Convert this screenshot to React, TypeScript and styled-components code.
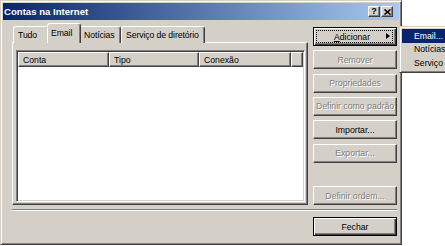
import React from "react";
import styled, { createGlobalStyle } from "styled-components";

const GlobalStyle = createGlobalStyle`
  html, body {
    margin: 0;
    padding: 0;
    background: #fff;
    overflow: hidden;
  }
  body {
    font-family: "Liberation Sans", Arial, sans-serif;
    font-size: 8.7px;
    color: #000;
  }
`;

const Screen = styled.div`
  position: relative;
  width: 445px;
  height: 246px;
  overflow: hidden;
`;

const Window = styled.div`
  width: 402px;
  box-sizing: border-box;
  background: #d4d0c8;
  border: 1px solid;
  border-color: #d4d0c8 #404040 #404040 #d4d0c8;
  box-shadow: inset 1px 1px #fff, inset -1px -1px #808080;
  padding: 2px;
`;

const TitleBar = styled.div`
  height: 17px;
  display: flex;
  align-items: center;
  justify-content: space-between;
  padding: 0 6px 0 1px;
  background: linear-gradient(to right, #0a246a, #a6caf0);
`;

const TitleText = styled.span`
  color: #fff;
  font-weight: bold;
  font-size: 9.6px;
`;

const CaptionButtons = styled.div`
  display: flex;
  gap: 1px;
`;

const CaptionButton = styled.div`
  width: 12px;
  height: 11px;
  box-sizing: border-box;
  background: #d4d0c8;
  border: 1px solid;
  border-color: #fff #404040 #404040 #fff;
  box-shadow: inset -1px -1px #808080;
  display: flex;
  align-items: center;
  justify-content: center;
  font-weight: bold;
  font-size: 9px;
  line-height: 1;
`;

const Body = styled.div`
  padding: 3px 2px 6px 9px;
`;

const MainRow = styled.div`
  display: flex;
  gap: 5px;
  height: 182px;
`;

const LeftColumn = styled.div`
  width: 296px;
  display: flex;
  flex-direction: column;
`;

const TabRow = styled.div`
  display: flex;
  align-items: flex-end;
  height: 20px;
  margin-bottom: -1px;
  padding-left: 1px;
  position: relative;
  z-index: 1;
`;

const Tab = styled.div<{ $active?: boolean; $width: number }>`
  box-sizing: border-box;
  width: ${(p) => p.$width}px;
  flex: none;
  height: ${(p) => (p.$active ? "20px" : "17px")};
  padding: ${(p) => (p.$active ? "0 0 2px 3px" : "0 0 0 4px")};
  margin: ${(p) => (p.$active ? "0 -2px" : "0")};
  position: relative;
  z-index: ${(p) => (p.$active ? 2 : 1)};
  display: flex;
  align-items: center;
  white-space: nowrap;
  letter-spacing: -0.1px;
  background: #d4d0c8;
  border-top: 1px solid #fff;
  border-left: 1px solid #fff;
  border-right: 1px solid #404040;
  box-shadow: inset -1px 0 #808080;
  border-radius: 3px 3px 0 0;
`;

const Panel = styled.div`
  flex: 1;
  display: flex;
  flex-direction: column;
  box-sizing: border-box;
  border: 1px solid;
  border-color: #fff #404040 #404040 #fff;
  box-shadow: inset -1px -1px #808080;
  padding: 7px 2px 2px 3px;
`;

const ListView = styled.div`
  flex: 1;
  background: #fff;
  border: 1px solid;
  border-color: #808080 #fff #fff #808080;
  box-shadow: inset 1px 1px #404040, inset -1px -1px #d4d0c8;
  padding: 1px;
`;

const Header = styled.div`
  display: flex;
  height: 15px;
`;

const HeaderCell = styled.div<{ $width?: number }>`
  box-sizing: border-box;
  ${(p) => (p.$width ? `width: ${p.$width}px;` : "flex: 1;")}
  display: flex;
  align-items: center;
  padding-left: 4px;
  background: #d4d0c8;
  border: 1px solid;
  border-color: #fff #404040 #404040 #fff;
  box-shadow: inset -1px -1px #808080;
  white-space: nowrap;
`;

const ButtonColumn = styled.div`
  width: 84px;
  display: flex;
  flex-direction: column;
  gap: 4.33px;
  padding-top: 4px;
`;

const Button = styled.div<{ $default?: boolean; $disabled?: boolean; $pushDown?: boolean }>`
  position: relative;
  height: 19px;
  flex: none;
  box-sizing: border-box;
  display: flex;
  align-items: center;
  justify-content: center;
  background: #d4d0c8;
  white-space: nowrap;
  color: ${(p) => (p.$disabled ? "#808080" : "#000")};
  text-shadow: ${(p) => (p.$disabled ? "1px 1px 0 #fff" : "none")};
  margin-top: ${(p) => (p.$pushDown ? "auto" : "0")};
  border: 1px solid;
  border-color: ${(p) => (p.$default ? "#000" : "#fff #404040 #404040 #fff")};
  box-shadow: ${(p) =>
    p.$default
      ? "inset 1px 1px #fff, inset -1px -1px #404040, inset -2px -2px #808080"
      : "inset -1px -1px #808080"};
`;

const MenuButton = styled(Button)`
  padding-right: 6px;

  &::after {
    content: "";
    position: absolute;
    inset: 2px 3px 2px 2px;
    border: 1px dotted #000;
  }
`;

const Arrow = styled.span`
  position: absolute;
  right: 6px;
  top: 5px;
  width: 0;
  height: 0;
  border-top: 3.5px solid transparent;
  border-bottom: 3.5px solid transparent;
  border-left: 4px solid #000;
`;

const Underline = styled.span`
  text-decoration: underline;
`;

const Separator = styled.div`
  margin-top: 4px;
  border-top: 1px solid #808080;
  border-bottom: 1px solid #fff;
`;

const Footer = styled.div`
  display: flex;
  justify-content: flex-end;
  margin-top: 6px;
`;

const FooterButton = styled(Button)`
  width: 84px;
`;

const Menu = styled.div`
  position: absolute;
  left: 399px;
  top: 26px;
  width: 110px;
  box-sizing: border-box;
  background: #d4d0c8;
  border: 1px solid;
  border-color: #d4d0c8 #404040 #404040 #d4d0c8;
  box-shadow: inset 1px 1px #fff, inset -1px -1px #808080;
  padding: 2px;
`;

const MenuItem = styled.div<{ $selected?: boolean }>`
  height: 13.5px;
  display: flex;
  align-items: center;
  padding-left: 12px;
  white-space: nowrap;
  background: ${(p) => (p.$selected ? "#0a246a" : "transparent")};
  color: ${(p) => (p.$selected ? "#fff" : "#000")};
`;

const tabs = [
  { label: "Tudo", width: 36 },
  { label: "Email", width: 34 },
  { label: "Notícias", width: 42 },
  { label: "Serviço de diretório", width: 84 },
];

export default function App() {
  return (
    <Screen>
      <GlobalStyle />
      <Window>
        <TitleBar>
          <TitleText>Contas na Internet</TitleText>
          <CaptionButtons>
            <CaptionButton>?</CaptionButton>
            <CaptionButton>
              <svg width="7" height="6" viewBox="0 0 7 6">
                <path d="M0.5 0.5 L6.5 5.5 M6.5 0.5 L0.5 5.5" stroke="#000" strokeWidth="1.6" />
              </svg>
            </CaptionButton>
          </CaptionButtons>
        </TitleBar>
        <Body>
          <MainRow>
            <LeftColumn>
              <TabRow>
                {tabs.map((t) => (
                  <Tab key={t.label} $width={t.width} $active={t.label === "Email"}>
                    {t.label}
                  </Tab>
                ))}
              </TabRow>
              <Panel>
                <ListView>
                  <Header>
                    <HeaderCell $width={91}>Conta</HeaderCell>
                    <HeaderCell $width={90}>Tipo</HeaderCell>
                    <HeaderCell $width={92}>Conexão</HeaderCell>
                    <HeaderCell />
                  </Header>
                </ListView>
              </Panel>
            </LeftColumn>
            <ButtonColumn>
              <MenuButton $default>
                <Underline>A</Underline>dicionar
                <Arrow />
              </MenuButton>
              <Button $disabled>Remover</Button>
              <Button $disabled>Propriedades</Button>
              <Button $disabled>Definir como padrão</Button>
              <Button>Importar...</Button>
              <Button $disabled>Exportar...</Button>
              <Button $disabled $pushDown>
                Definir ordem...
              </Button>
            </ButtonColumn>
          </MainRow>
          <Separator />
          <Footer>
            <FooterButton $default>Fechar</FooterButton>
          </Footer>
        </Body>
      </Window>
      <Menu>
        <MenuItem $selected>Email...</MenuItem>
        <MenuItem>Notícias...</MenuItem>
        <MenuItem>Serviço de diretório...</MenuItem>
      </Menu>
    </Screen>
  );
}
